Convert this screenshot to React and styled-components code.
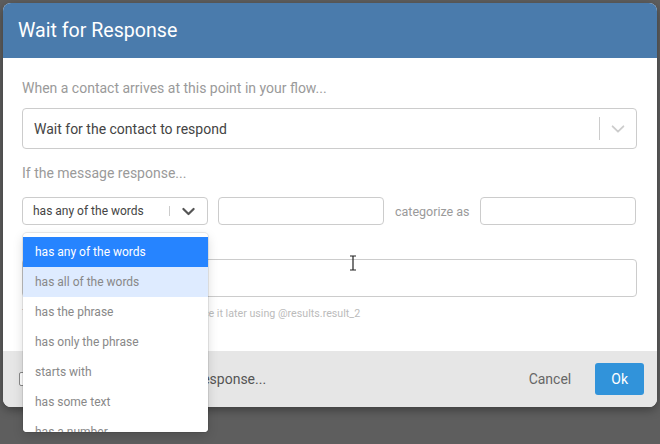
import React from 'react';
import styled, { createGlobalStyle } from 'styled-components';

const Global = createGlobalStyle`
  html, body {
    margin: 0;
    background: #5e5e5e;
    font-family: Roboto, "Noto Sans", sans-serif;
  }
`;

const Page = styled.div`
  width: 660px;
  height: 444px;
  padding: 3px;
  box-sizing: border-box;
  overflow: hidden;
`;

const Modal = styled.div`
  position: relative;
  width: 654px;
  border-radius: 8px;
  background: #fff;
  box-shadow: 0 3px 10px rgba(0, 0, 0, 0.35);
`;

const Header = styled.div`
  height: 55px;
  background: #4a7bac;
  border-radius: 8px 8px 0 0;
  color: #fff;
  font-size: 19.6px;
  display: flex;
  align-items: center;
  padding: 0 15px;
`;

const Body = styled.div`
  position: relative;
  padding: 22px 20px 30px 19px;
`;

const Label = styled.div`
  font-size: 14px;
  line-height: 16px;
  color: #9a9a9a;
  margin-bottom: ${(p) => p.$gap || 12}px;
`;

const Select = styled.div`
  display: flex;
  align-items: center;
  box-sizing: border-box;
  height: ${(p) => (p.$small ? 28 : 41)}px;
  width: ${(p) => (p.$small ? '186px' : '100%')};
  border: 1px solid #cccccc;
  border-radius: 4px;
  background: #fff;
  margin-bottom: ${(p) => (p.$small ? 0 : 16)}px;
  padding-left: ${(p) => (p.$small ? 10 : 11)}px;
  font-size: ${(p) => (p.$small ? 12 : 14)}px;
  color: #444;
  flex-shrink: 0;
`;

const SelectValue = styled.span`
  flex: 1;
  white-space: nowrap;
`;

const Separator = styled.span`
  width: 1px;
  align-self: stretch;
  margin: 8px 0;
  background: #cccccc;
`;

const Indicator = styled.span`
  display: flex;
  align-items: center;
  justify-content: center;
  width: ${(p) => (p.$small ? 37 : 36)}px;
`;

const Row = styled.div`
  position: relative;
  display: flex;
  align-items: center;
  height: 28px;
  margin-bottom: 34px;
`;

const Input = styled.div`
  box-sizing: border-box;
  height: ${(p) => p.$h || 28}px;
  width: ${(p) => (p.$w ? `${p.$w}px` : '100%')};
  border: 1px solid #cccccc;
  border-radius: 4px;
  margin-left: ${(p) => p.$ml || 0}px;
  flex-shrink: 0;
`;

const Inline = styled.span`
  font-size: 12.5px;
  color: #9a9a9a;
  margin: 0 10px 0 11px;
  white-space: nowrap;
`;

const Helper = styled.div`
  margin-top: 10px;
  font-size: 10.7px;
  line-height: 14px;
  color: #bbbbbb;
  white-space: nowrap;
`;

const Footer = styled.div`
  height: 56px;
  background: #e6e6e6;
  border-radius: 0 0 8px 8px;
  display: flex;
  align-items: center;
  padding: 0 13px 0 16px;
`;

const Check = styled.label`
  display: flex;
  align-items: center;
  gap: 0;
  font-size: 14px;
  color: #555;
  flex: 1;
`;

const Box = styled.span`
  width: 12px;
  height: 12px;
  border: 1px solid #888;
  border-radius: 2px;
  background: #fff;
`;

const Button = styled.button`
  font-family: inherit;
  font-size: 14px;
  border: none;
  border-radius: 3px;
  height: 32px;
  padding: 0 ${(p) => (p.$primary ? 16 : 13)}px;
  margin-left: ${(p) => (p.$primary ? 11 : 0)}px;
  background: ${(p) => (p.$primary ? '#3193da' : 'transparent')};
  color: ${(p) => (p.$primary ? '#fff' : '#666')};
`;

const Menu = styled.div`
  position: absolute;
  left: 1px;
  top: 36px;
  width: 185px;
  height: 199px;
  overflow: hidden;
  background: #fff;
  border-radius: 4px;
  box-shadow: 0 0 0 1px rgba(0, 0, 0, 0.08), 0 4px 11px rgba(0, 0, 0, 0.15);
  padding-top: 4px;
  box-sizing: border-box;
  z-index: 5;
`;

const Option = styled.div`
  height: 30px;
  display: flex;
  align-items: center;
  padding-left: 12px;
  font-size: 12px;
  white-space: nowrap;
  color: ${(p) => (p.$active ? '#fff' : '#888')};
  background: ${(p) => (p.$active ? '#2684ff' : p.$focus ? '#deebff' : '#fff')};
`;

const Cursor = styled.svg`
  position: absolute;
  left: 346px;
  top: 197px;
`;

const Chevron = ({ color, size, weight }) => (
  <svg width={size} height={size} viewBox="0 0 20 20">
    <path
      d="M4 7 L10 13 L16 7"
      fill="none"
      stroke={color}
      strokeWidth={weight}
      strokeLinecap="round"
      strokeLinejoin="round"
    />
  </svg>
);

const options = [
  'has any of the words',
  'has all of the words',
  'has the phrase',
  'has only the phrase',
  'starts with',
  'has some text',
  'has a number',
];

export default function App() {
  return (
    <Page>
      <Global />
      <Modal>
        <Header>Wait for Response</Header>
        <Body>
          <Label>When a contact arrives at this point in your flow...</Label>
          <Select>
            <SelectValue>Wait for the contact to respond</SelectValue>
            <Separator />
            <Indicator>
              <Chevron color="#cccccc" size={18} weight={2} />
            </Indicator>
          </Select>
          <Label $gap={16}>If the message response...</Label>
          <Row>
            <Select $small>
              <SelectValue>has any of the words</SelectValue>
              <Separator />
              <Indicator $small>
                <Chevron color="#555" size={17} weight={2.6} />
              </Indicator>
            </Select>
            <Input $w={166} $ml={10} />
            <Inline>categorize as</Inline>
            <Input $w={156} />
            <Menu>
              {options.map((o, i) => (
                <Option key={o} $active={i === 0} $focus={i === 1}>
                  {o}
                </Option>
              ))}
            </Menu>
          </Row>
          <Input $h={38} />
          <Helper>This name allows you to easily reference it later using @results.result_2</Helper>
          <Cursor width="8" height="16" viewBox="0 0 8 16">
            <path d="M1 1 H7 M4 1 V15 M1 15 H7" stroke="#222" strokeWidth="1.2" fill="none" />
          </Cursor>
        </Body>
        <Footer>
          <Check>
            <Box />
            Continue when there is no response...
          </Check>
          <Button>Cancel</Button>
          <Button $primary>Ok</Button>
        </Footer>
      </Modal>
    </Page>
  );
}
